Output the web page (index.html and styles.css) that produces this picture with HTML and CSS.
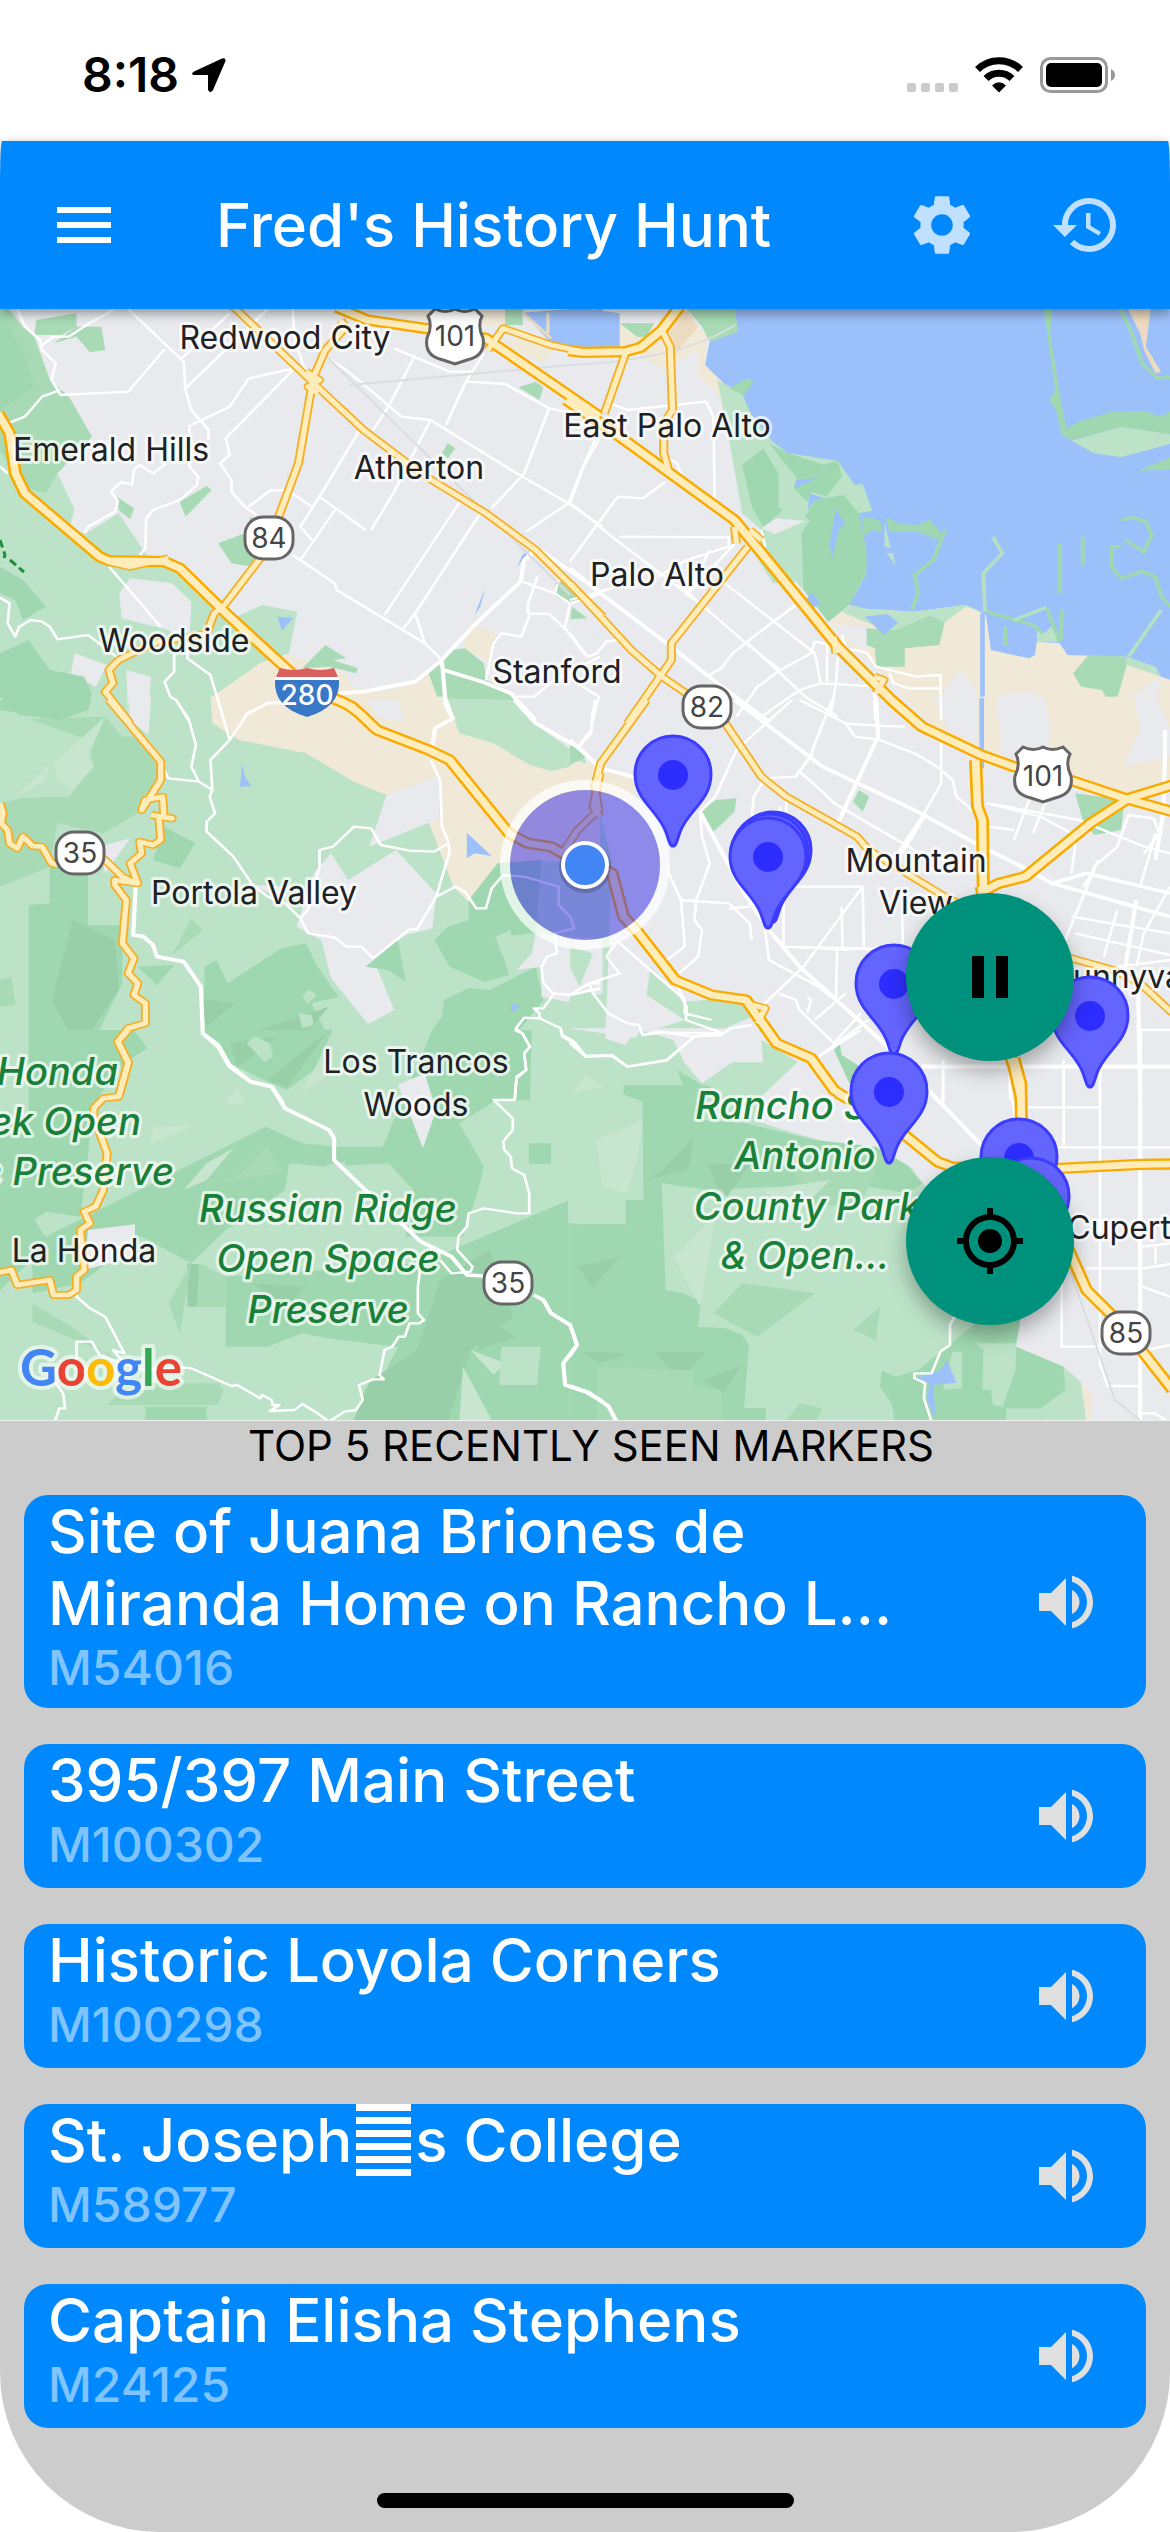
FILE: index.html
```html
<!DOCTYPE html>
<html lang="en">
<head>
<meta charset="utf-8">
<meta name="viewport" content="width=device-width, initial-scale=1">
<title>Fred's History Hunt</title>
<link rel="stylesheet" href="styles.css">
</head>
<body>
<div class="app">
  <div class="status">
    <div class="status-left">
      <span class="time">8:18</span>
      <svg class="locate-arrow" viewBox="0 0 36 36" aria-hidden="true"><path d="M3 14.500 31 1.500q4-1 3.500 2.500L22 33q-2.500 4-5 0V18H3q-4-1 0-3.500z"/></svg>
    </div>
    <svg class="status-icons" viewBox="0 0 208 38" aria-hidden="true">
      <g fill="#cbcbcb"><rect y="27" width="9" height="9" rx="2"/><rect x="14" y="27" width="9" height="9" rx="2"/><rect x="28" y="27" width="9" height="9" rx="2"/><rect x="42" y="27" width="9" height="9" rx="2"/></g>
      <g fill="none" stroke="#000" stroke-width="7"><path d="M70.500 13.500a30.500 30.500 0 0 1 43 0"/><path d="M79 22.500a18.500 18.500 0 0 1 26 0"/></g>
      <path d="M92 36.500 85 29.500q7-6.500 14 0z"/>
      <rect x="134.500" y="2.500" width="65" height="33" rx="9" fill="#fff" stroke="#999" stroke-width="3"/>
      <rect x="139" y="7" width="56" height="24" rx="5"/>
      <path d="M204 13q4 2 4 6t-4 6z" fill="#999"/>
    </svg>
  </div>

  <header class="bar">
    <button class="icon-button" aria-label="Menu"><svg viewBox="0 0 24 24"><path d="M3 18h18v-2H3v2zm0-5h18v-2H3v2zm0-7v2h18V6H3z"/></svg></button>
    <h1>Fred's History Hunt</h1>
    <button class="icon-button dim" aria-label="Settings"><svg viewBox="0 0 24 24"><path d="M19.140 12.940c.04-.3.06-.61.06-.94 0-.32-.02-.64-.07-.94l2.030-1.580c.18-.14.23-.41.12-.61l-1.920-3.320c-.12-.22-.37-.29-.59-.22l-2.390.96c-.5-.38-1.030-.7-1.620-.94l-.36-2.540c-.04-.24-.24-.41-.48-.41h-3.840c-.24 0-.43.17-.47.41l-.36 2.540c-.59.24-1.130.57-1.620.94l-2.390-.96c-.22-.08-.47 0-.59.22L2.740 8.870c-.12.21-.08.47.12.61l2.030 1.580c-.05.3-.09.63-.09.94s.02.64.07.94l-2.030 1.580c-.18.14-.23.41-.12.61l1.920 3.320c.12.22.37.29.59.22l2.390-.96c.5.38 1.030.7 1.620.94l.36 2.540c.05.24.24.41.48.41h3.840c.24 0 .44-.17.47-.41l.36-2.540c.59-.24 1.130-.56 1.620-.94l2.390.96c.22.08.47 0 .59-.22l1.920-3.320c.12-.22.07-.47-.12-.61l-2.010-1.580zM12 15.600c-1.980 0-3.600-1.620-3.600-3.600s1.620-3.600 3.600-3.600 3.600 1.620 3.600 3.600-1.620 3.600-3.600 3.600z"/></svg></button>
    <button class="icon-button dim" aria-label="History"><svg viewBox="0 0 24 24"><path d="M13 3c-4.970 0-9 4.030-9 9H1l3.890 3.890.07.14L9 12H6c0-3.870 3.130-7 7-7s7 3.130 7 7-3.130 7-7 7c-1.930 0-3.680-.79-4.940-2.060l-1.420 1.420C8.270 19.990 10.510 21 13 21c4.970 0 9-4.030 9-9s-4.030-9-9-9zm-1 5v5l4.280 2.540.72-1.210-3.500-2.080V8H12z"/></svg></button>
  </header>

  <section class="map" aria-label="Map">
    <svg class="map-canvas" viewBox="0 309 1170 1111" role="img" aria-label="Map of Palo Alto and Mountain View">
      <defs>
        <g id="freeways">
          <g transform="translate(0 300) scale(.38265 .33333)"><path d="M-5 340 25 400 40 520 65 580 260 770 285 782 430 785 470 805 600 950 800 1160 900 1208 940 1240 985 1290M880 22 960 60 1110 85 1270 115 1568 350"/></g>
          <g transform="translate(570 300) scale(.38265 .33333)"><path d="M-10 300 100 385 430 660 530 800 700 1040 840 1200 920 1280M-4 152 35 157 145 155 185 142 240 90 285 22"/></g>
          <g transform="translate(0 700) scale(.38265 .33333)"><path d="M870 -5 920 20 985 90 1120 150 1175 180 1330 400 1380 430 1440 440 1500 480"/></g>
          <g transform="translate(570 700) scale(.38265 .33333)"><path d="M0 460 110 520 140 650 180 700 275 840 370 885 460 900 540 1030 630 1075 690 1170 730 1200M840 0 920 80 1075 165 1160 200 1320 245 1450 295 1575 335M1060 180 1065 320 1078 360 1080 570M1575 255 1460 295 1360 370 1190 530 1120 550 1070 580M1075 560 1130 1000 1160 1100 1180 1200"/></g>
          <g transform="translate(570 1030) scale(.38265 .33333)"><path d="M700 190 800 250 880 320 960 395 1000 412 1100 408 1280 415 1490 403 1575 402M1160 85 1178 160 1180 300 1280 600 1350 780 1420 860 1500 970 1575 1080"/></g>
        </g>
        <g id="arterials">
          <g transform="translate(0 300) scale(.38265 .33333)"><path d="M610 20 820 250 950 390 1100 520 1270 640 1400 750 1575 950M905 80 850 150 820 230 810 290 780 490 725 660M680 775 590 910 560 940 540 1000 400 1030 310 1080 285 1110 295 1150 275 1175 340 1270M1275 150 1315 85 1440 135 1530 157 1568 157M280 785 340 800 440 775M890 60 910 90M800 215 835 240 805 260 830 280"/></g>
          <g transform="translate(570 300) scale(.38265 .33333)"><path d="M0 850 160 1050 240 1130 310 1185M145 160 90 340M240 90 262 140 268 330 245 370 245 460 260 520M465 740 265 1030 265 1080 150 1270M430 680 435 730M470 690 500 720M690 1010 695 1060M795 1130 820 1140 800 1180"/></g>
          <g transform="translate(0 700) scale(.38265 .33333)"><path d="M285 0 420 185 420 240 370 330 380 300 425 290 428 345M395 345 450 355 415 350 420 420 400 435 365 425 370 460 340 490 360 550 300 540 300 555 330 600 320 730 350 775 335 820 360 850 350 885 380 910 380 970 335 985 308 1025 335 1090 310 1190M0 310 8 340 3 370 20 390 25 430 45 445 60 410 85 438 110 440 135 490 150 495M270 475 320 530 355 550M1568 220 1550 320 1568 350"/></g>
          <g transform="translate(570 700) scale(.38265 .33333)"><path d="M200 0 80 190 65 260 75 330 20 390 -20 460M400 60 500 230 565 290 750 410 780 450 980 590 1310 775 1420 810 1490 850 1575 940M460 910 510 925 490 970"/></g>
          <g transform="translate(0 1030) scale(.38265 .33333)"><path d="M335 0 308 35 335 95 310 200 270 205 245 235 245 260 280 370 270 480 250 530 220 545 235 580 210 600 220 720 200 740 200 780 180 795 140 795 130 750 45 765 30 720 -5 728"/></g>
        </g>
        <g id="pin"><path d="M0 0C-3 0-4-5-7-14-15-36-38-45-38-72a38 38 0 0 1 76 0C38-45 15-36 7-14 4-5 3 0 0 0z"/><circle cy="-71" r="15"/></g>
        <g id="us-shield"><path d="M-27-22-20-29Q-9-24 0-29 9-24 20-29L27-22Q22-12 28 0 31 18 12 22L0 26-12 22Q-31 18-28 0-22-12-27-22z"/></g>
      </defs>

      <rect y="300" width="1170" height="1130" fill="#e8eaed"/>

      <!-- Peninsula hills, north-west -->
      <g transform="translate(0 300) scale(.38265 .33333)">
        <path class="park" d="M0 20V1300H590L550 1195 680 1090 755 1060 777 935 685 915 600 960 500 850 380 760 310 640 225 700 180 690 195 628 150 520 240 410 180 290 130 240 90 110 60 80 20 20z"/>
        <path class="wood" d="M0 20 20 27 60 80 90 110 130 240 180 290 240 410 150 520 120 580 60 560 0 450z"/>
        <path class="city" d="M312 880 340 835 450 850 500 905 495 1040 440 990 318 955zM195 1060 280 1095 250 1160 185 1120zM330 1110 395 1130 385 1260H335z"/>
        <path class="forest" d="M0 40 60 150 90 260 0 330zM0 880 40 900 60 960 120 920 60 840 0 800zM0 1060 75 1020 130 1110 220 1130 240 1180 230 1230 160 1260 50 1245 0 1190z"/>
        <path class="wood" d="M95 60 200 40V80L160 105H90zM140 130 200 80 265 80 275 150 235 157 200 110zM470 605 540 558 553 570 485 650zM307 592 350 625 340 658 310 630zM570 730 640 700 655 650 690 680 660 800 605 790zM1355 262 1400 245 1420 262 1410 300zM1170 430 1190 445 1170 475 1155 460zM1450 850 1480 840 1530 900 1490 910 1455 890zM1495 920 1535 955 1490 958z"/>
        <path class="sand" d="M550 1195 680 1090 750 1062 790 1080 900 1120 920 1160 1000 1175 1090 1150 1120 1120 1170 1180V1270H555zM1225 970 1295 1000 1280 1085 1210 1045zM960 20H1320V75L1300 80 1240 70 1120 60zM1300 130 1440 100 1450 140 1420 190z"/>
        <path class="wood" d="M790 1105 850 1035 905 1075 870 1080 935 1105 930 1120 860 1100zM1120 1120 1180 1050 1215 1045 1265 1090 1270 1140 1340 1180 1400 1260H1165z"/>
        <path class="wood" d="M1320 20H1366V75H1320z"/>
        <path class="water" d="M725 950 767 953 737 992zM1240 945 1268 865 1255 920zM1352 800 1365 765 1385 750zM1366 38 1575 20V140L1450 140z"/>
        <path class="sand-line" d="M1366 38 1440 115M1432 38V100M1505 72 1560 20"/>
      </g>

      <!-- San Francisco Bay -->
      <g transform="translate(570 300) scale(.38265 .33333)">
        <path class="sand" d="M675 965 710 935 1087 920 1300 1050 1575 1130V1275H945L820 1125 700 1000zM130 70 240 80 290 20 330 80 355 100 353 195 415 265 420 400 400 320 380 270 335 230 335 150 240 210 205 180 130 140z"/>
        <path class="water" d="M430 20H1575V1142L1545 1130 1455 1070 1300 1065 1280 1030 1220 1025 1215 1065 1200 1075 1100 1050 1087 945 1035 915 900 935 750 925 730 915 520 700 450 285 415 265 353 195 365 125 435 95zM0 20 130 40V140H0z"/>
        <path class="dune" d="M260 100 300 20 335 80 260 180z"/>
        <path class="wood" d="M300 20H430L440 95 365 125 345 80zM130 70H220L200 110H175z"/>
        <path class="park" d="M385 240 450 280 460 310 475 345 530 425 570 460 700 482 790 632 755 640 775 820 730 915 675 965 620 880 590 845 530 850 470 740 500 690 450 640 425 480 410 380z"/>
        <path class="forest" d="M415 265 465 235 480 248 455 285zM450 495 505 445 545 520V620L557 630 505 682 475 620zM520 430 570 460 665 495 700 480 710 530 670 590 630 575 620 605 585 565 593 535zM605 700 628 660 615 650 640 600 715 585 755 640 775 750V815L730 915 675 965 610 870zM765 650 810 660 815 695 790 690 765 710zM825 650 860 672 910 675 940 658 970 700 965 720 910 695 835 695z"/>
        <path class="water" d="M695 625 720 675 705 680 685 775 678 735zM593 540 648 535 585 565zM625 580 665 595 640 600 622 630zM632 878 655 910 635 925 615 900z"/>
        <path class="park" d="M725 555 765 553 790 632 715 585zM822 665 838 745 822 740zM828 760H845L850 795z"/>
        <path class="city" d="M500 685 540 655 615 663 535 702zM680 975 780 980 775 1060 705 1000zM1020 1110 1060 1165 1055 1260H970L950 1215zM1115 1185 1215 1175 1250 1260H1120zM1465 1190 1545 1130 1520 1260zM880 1200 940 1185V1260z"/>
        <path class="wood" d="M775 985 850 990 940 945 980 965 965 1035 875 1045V1100H800L797 1045 775 1035zM1355 1065 1455 1070V1095L1430 1195 1405 1200 1390 1170 1335 1160 1315 1120z"/>
        <path class="park" d="M710 935 735 915 780 928 900 935 1035 915 1085 940 1035 920 980 965 940 945 850 990 780 970zM1455 1070 1530 1100 1545 1130 1455 1095zM1220 1025V980L1240 1000 1262 975 1280 1025z"/>
        <path class="water" d="M770 950 830 942 857 968 820 1005z"/>
        <path class="forest" d="M1237 20H1260L1255 100 1270 210 1280 280 1297 385 1330 365 1415 335 1500 333 1545 350 1575 330V405L1440 380 1310 420 1285 405 1270 330 1253 300 1268 270zM1485 512 1575 470V508z"/>
        <path class="park" d="M1310 422 1440 380 1575 404V430L1440 472 1370 460z"/>
        <path class="dune" d="M1455 20H1518L1505 140 1545 215 1530 220 1500 150 1490 100z"/>
        <path class="marsh" d="M1435 22 1465 90 1495 190 1535 235 1568 232M980 690 950 780 900 825 910 880 893 930M1280 730V880M1340 710V795M1440 660 1470 652 1505 665 1520 705 1500 755 1450 720M1440 740 1415 740 1415 800 1440 835 1495 815 1530 830 1545 890 1575 925M1090 935 1210 975 1235 1000M1245 925 1280 1025M1285 930 1283 1020M1137 980V1035"/>
        <path class="marsh pale" d="M1105 710 1130 760 1080 820 1085 935M1460 1070 1545 930M1160 960 1245 922"/>
        <path class="creek" d="M1078 940V1275"/>
      </g>

      <!-- Portola Valley -->
      <g transform="translate(0 700) scale(.38265 .33333)">
        <path class="park" d="M0 55H335V-5H570L1165-5 1350 0 1420 90 1530 180 1600 480 1575 1210H0z"/>
        <path class="city" d="M335-10H395L388 105 340 60zM1340 0H1568L1540 150 1420 90z"/>
        <path class="sand" d="M550-10 555 70 625 120 800 160 925 245 1010 285 1145 230 1150 355 1120 365 1165 500 1185 560 1240 625H1270L1310 530 1300 490 1568 480V180L1440 213 1385 195 1290 130 1200 100 1165-10z"/>
        <path class="city" d="M960 0H1040L1055 65 985 50zM1010 285 1145 228 1150 355 965 440zM865 460 910 540 1035 450 1140 580 1130 685 1060 705 975 775 1030 930 962 972 865 835 840 720 775 680 820 520zM660 555 760 560 740 600z"/>
        <path class="wood" d="M0 60 275 50 320 110 350 110 420 190 415 240 360 340 270 400 150 370 130 500 0 560z"/>
        <path class="forest" d="M0 0H240L230 30 150 60 90 45 0 30z"/>
        <path class="park" d="M0 55 60 50 230 120 245 200 180 290 60 295 0 310z"/>
        <path class="moss" d="M140 190 275 50 230 170 245 200 190 265 150 240zM35 295 130 190 120 240z"/>
        <path class="forest" d="M430 380 510 430 470 505 400 480zM75 615 130 610V500H230V675H320V850L250 1010 340 1000 385 1045 300 1100 290 1210H75zM535 800 565 780 595 850 735 745 800 730 830 800 885 890 815 910 870 1040 750 1200 700 1150 590 1080 530 1000zM1135 720 1170 680 1225 660V600L1300 490 1415 480 1400 700 1300 710 1330 825 1265 845 1175 800zM955 800 1040 720 1060 845 1015 810zM1160 900 1225 865 1280 870 1400 800 1420 900 1350 1000 1385 1210H1080L1090 1050 1155 950zM360 800 455 795 410 855z"/>
        <path class="dark" d="M190 660 300 720 310 870 240 990 190 1015 135 900zM520 895 615 910 540 980zM600 1020 860 920 740 1080 860 990 750 1180 690 1080z"/>
        <path class="wood" d="M450 765 500 655 530 690zM0 840 30 830 40 915 0 920z"/>
        <path class="park" d="M790 890 805 868 828 885 805 912zM780 940 815 945 820 975 790 985zM645 1030 665 1008 705 1030 713 1070 690 1085zM1295 710 1335 690 1335 790 1310 760z"/>
        <path class="city" d="M1415 800 1350 810 1390 760 1400 700 1575 720V880L1480 905 1415 890zM260 440 340 415 275 520zM1040 1150 1110 1120 1130 1210H1060z"/>
        <path class="water" d="M633 192 640 230 657 258 627 260zM1220 398 1285 468 1240 460 1220 475zM1335 908 1360 920 1335 937z"/>
      </g>

      <!-- Mountain View -->
      <g transform="translate(570 700) scale(.38265 .33333)">
        <path class="sand" d="M0 175 80 205 180 235 160 290 0 285zM870-10H1575V250L1450 290 1320 240 1160 190 1075 150 960 90 930 60z"/>
        <path class="city" d="M950-10H1065V130L990 90zM1115-10H1240L1255 90 1245 180 1130 170zM1475-10H1530L1568 85V170L1445 200 1490 90z"/>
        <path class="wood" d="M0 120 45 170 0 195zM340 335 380 300 435 295 430 335 375 395zM755 270 782 290 765 335 740 305zM1320 280 1450 300 1440 390 1370 405 1340 360z"/>
        <path class="park" d="M0 740 60 760 25 860 0 800zM0 880 60 870 75 950 75 1010 145 1035 180 975 190 1000 300 960 200 885 210 800 300 905 460 890 475 950 405 985 390 1000 325 1010 270 1030 295 1110 345 1150 370 1130 425 1085 505 1085 500 1020 590 1080 700 1125 560 1210H0zM690 1050 705 1030 710 1070 780 1130 730 1190z"/>
        <path class="creek" d="M1076-5V205"/>
      </g>

      <!-- Russian Ridge -->
      <g transform="translate(0 1030) scale(.38265 .33333)">
        <path class="park" d="M0 0H1580V1180H0z"/>
        <path class="forest" d="M75 0H350L385 55 310 110 240 230 230 380 210 560 120 545 90 570 130 640 0 780V300L75 250zM530 0H870L820 120 750 180 690 150 600 100zM695 290 790 340 880 350 1000 350 1130 0H1390L1385 210 1290 215 1200 280 1265 410 1250 480 1210 620 1060 620 1080 480 1015 400 850 410 755 400 745 480 590 600 500 700 370 620 210 760 85 790V640zM590 740 1100 700 1568 470V1180H1000L940 1140 950 1060 1000 1040 1040 950 850 925 800 950H590z"/>
        <path class="park" d="M1385 250 1568 130V585H1520V460H1440L1430 540 1385 550zM790 910 950 945 1010 960 930 1130 860 1175H540V1080L590 1000z"/>
        <path class="forest" d="M1382 340H1440V402H1382zM380 1130H540V1180H380z"/>
        <path class="dark" d="M1090 960 1150 750 1280 660 1340 860 1230 960 1170 1180H920L970 1050zM600 40 730 20 620 110zM1255 850 1350 920 1250 960zM700 150 860 0 750 170zM490 700 530 705 515 830H490zM660 760 800 770 750 830zM1480 960 1568 950V990z"/>
        <path class="wood" d="M85 820V875L280 970 380 1060 570 1060 585 1080 570 1125H280L350 1040 200 900zM520 700 590 740V830H515zM440 820 500 700 470 910zM535 460 740 430 700 350 620 440z"/>
        <path class="moss" d="M400 290 510 285 395 340zM480 480 540 400 610 355 540 450zM780 190 840 90 850 140zM1490 240 1560 230 1500 400zM585 220 620 175 640 220zM1210 1010 1290 1180H1200zM1230 960 1320 1000 1290 1035z"/>
        <path class="park" d="M1310 950H1413L1403 1065H1305zM850 405 900 395 920 450zM915 440 1000 405 1018 440V480H930zM645 40 665 18 705 40 713 80 690 95z"/>
        <path class="city" d="M1040 165 1110 130 1140 240 1105 355 1080 280zM230 600 353 583 350 680 220 720z"/>
      </g>

      <!-- Rancho San Antonio -->
      <g transform="translate(570 1030) scale(.38265 .33333)">
        <path class="city" d="M-5-5H1580V1180H1100L400 100 345 160 300 100 270 40z"/>
        <path class="park" d="M-5 40 70 60 145 75 185 0 270 30 300 100 345 160 425 97H505L500 30 595 95 500 200 480 270 560 300 680 340 790 350 890 410 930 470 1165 900V950L1290 1010 1335 1055 1365 1180H-5z"/>
        <path class="forest" d="M140 165H295L280 120 345 165 370 170 340 270 460 280 640 330 800 350 880 405 920 460 880 490 780 470H540L360 480 240 460 250 780 295 790 342 815 335 890 410 895 450 915 468 945 455 1135H512V1180H-5V580L35 583H145V510H192L188 213H140zM690 60 705 40 710 75 780 125 730 160zM815 1020 850 1040 910 1020 1060 880 1180 850 1165 950 1290 1010 1295 1080 1230 1135V1180H850L840 1120 810 1070z"/>
        <path class="park" d="M-5 130 190 215V505H145V580H35V460H-5zM1060 940H1165V1020L1130 1130 1105 1125 1100 1080H1078L1080 960zM980 1080 1024 1075V965H1000L975 1070zM1140 1135H1230V1180H1140zM590 1000 680 965 670 1090z"/>
        <path class="dark" d="M360 400 470 405 410 500 380 460zM230 430 325 320 310 420 200 450zM20 710 130 680 60 775zM25 965 155 970 80 1000zM220 965H355L290 1050zM350 1050 450 1005 400 1090z"/>
        <path class="wood" d="M375 850 450 760 640 790 490 920zM570 400 680 350 800 420 760 520 640 530zM740 900 810 830 800 930zM70 1010 320 1020 325 1070 395 1080V1180H70zM600 1120 660 1135 640 1180H560z"/>
        <path class="moss" d="M70 330 190 270 180 360 150 490 85 470zM270 680 380 560 340 830zM500 480 680 450 600 540zM5 190 40 135 90 170z"/>
        <path class="water" d="M905 1045 970 1020 985 990 1010 1058 950 1065 955 1165 932 1110 940 1060z"/>
        <path class="sand" d="M1335 1055 1365 1100 1363 1180H1350z"/>
      </g>

      <!-- Local streets -->
      <g class="streets">
        <g transform="translate(0 300) scale(.38265 .33333)"><path d="M45 27 65 80 105 120 110 150 145 190 135 240 158 285M105 140 140 110 180 110 240 65 300 27M158 285 335 275 430 148M158 270 110 290 65 350 20 370M335 27 480 185 485 270 500 330 545 390 545 420M480 270 700 27M470 180 600 40M765 27 770 120 800 220M500 375 600 320 650 235 770 205 590 415 600 465 575 490 605 540 605 575 640 620 670 645M495 375V500L518 530 515 555 470 600 400 630 382 655 380 745 365 765M435 490 400 520 365 495 350 510 345 555 318 545 290 575 308 605 300 635 230 680 220 700M650 620 705 572 750 570 815 620M940 390 835 590 785 680 815 720M835 590 955 690M875 630 785 780M1205 600 1005 945M1258 635 1085 940 1055 985M1085 940 1110 1030M765 765 875 850 880 870 1110 1030 1155 1080M850 170 905 210 1050 350 1125 360 1350 520 1485 610 1575 680M1085 165 1015 320 975 390M1030 145 1175 215 1230 215M1265 160 1220 240 1165 375M1220 245 1320 252 1435 325 1500 340M1435 325 1370 520 1285 625M1125 360 1030 575 970 690M1555 420 1520 510 1485 610 1375 695M1405 830 1380 910V940L1435 942 1480 990 1530 1065M1365 845 1450 880 1490 910 1475 990M1575 880 1490 910M1385 945 1362 1010 1310 1000 1290 1030 1270 1140M1465 820 1450 880M285 800 420 980M-5 890 25 910 20 970 40 1010 50 980 80 960 110 965 130 980 150 1018 230 1005 310 1075M455 1060V1115L430 1145 445 1190 460 1200 495 1260M490 1030V1075L550 1125 585 1260M635 1260 645 1240 700 1210H740M0 500 20 520M1340 1190H1395L1450 1140 1568 1070"/><path class="wide" d="M885 1180 950 1175 1085 1145 1150 1085 1240 975 1360 845 1370 780 1405 745 1575 880M1155 1085 1165 1215 1185 1260M1160 1110 1260 1145 1335 1180 1350 1200 1400 1260"/></g>
        <g transform="translate(570 300) scale(.38265 .33333)"><path d="M105 310 150 330 355 305 375 350 378 595M75 420 35 500 0 610M250 545 190 595 125 590 70 675 0 785M0 610 20 625 115 715 350 920M130 710 415 712V740L305 780 230 830M435 725 350 830 305 885 365 750M0 900 80 875 170 845M405 850 640 1060M590 915 480 1010 425 1060 395 1105 365 1125M435 1250 490 1160 550 1110 630 1060 640 1025 775 1058 800 1100 905 1130 968 1125 970 1260M550 1110 465 1035 285 855M245 470 280 490 290 520M465 1030 620 1195 700 1250M500 1250 600 1170 655 1150 780 1158M640 1060 655 1150M672 1035V1145M700 1070 695 1150 680 1250M835 1120 845 1150 885 1165H968M0 1000 45 1070 70 1060 95 1025 125 1020M0 1135 75 1190 60 1260M500 690 510 740M590 850 600 910M710 1005 720 1040"/><path class="wide" d="M0 805 80 880 270 1045 380 1145 520 1265M795 1140 800 1260"/></g>
        <g transform="translate(0 700) scale(.38265 .33333)"><path d="M420 190 440 235 520 245 555 270 548 290 562 340 540 365 540 395 610 470 660 555 700 590 745 610 785 655 805 700 875 712 905 740H945L975 775 1070 688H1090L1140 590 1175 455 1170 420 1155 380 1150 240 1125 180M460 0 495 65 512 135 500 200 520 245M570 0 600 120 550 180 555 270M600 120 645 45 700 8H740M785 655 805 630 835 500V450L870 440 925 380 970 385 995 435 1070 452 1135 455 1170 430M1140 590 1190 560 1215 575 1245 625H1270L1285 565 1315 525 1370 530 1460 560V615L1490 650 1500 685 1450 700 1455 760 1430 770 1415 800 1420 850 1445 880 1490 885 1568 865M1445 885 1420 925H1395L1410 940V955L1370 953 1348 985 1365 1000 1385 1040 1370 1060 1375 1110 1350 1130 1345 1200M1410 955 1465 985 1470 1005 1500 1025 1530 1068H1568M1535 850H1568M1515 135 1545 90 1555 0"/><path class="wide" d="M355 550 348 705 375 710 400 735 410 770 480 785 525 860 530 1000 570 1040 600 1100 655 1145 710 1160 740 1210M1165 0 1183 55 1137 85 1130 140M1345 0 1400 70 1515 145 1575 210"/></g>
        <g transform="translate(570 700) scale(.38265 .33333)"><path d="M75 0 60 30 55 100 20 145M580 0 435 150 380 290 340 335 345 410 365 490 330 600 325 660 345 690 335 770 265 840M600 0 720 70 745 110 805 118 900 160 960 200 1000 240 1010 290 1060 340M685 0 640 130 630 165 590 230 510 235 480 290 475 350M715 70 820 78 875 80M635 160 600 215 650 265 690 310 900 450 1000 490M970 100V250L920 350 850 470M565 290V350M550 320 545 400M1200 300 1160 420M1260 180 1245 300 1210 400M1095 310 1330 360 1500 440 1568 460M1095 380 1160 390M250 500 290 600 300 740 240 790M290 600 415 610 470 670 475 720M415 625 470 620M560 560H765M765 560 610 800 500 920M558 560V740M710 620 712 740M765 560 768 740M868 640 870 740M510 690 520 780 650 860 680 890M560 740 870 748M698 750 695 900M560 740 730 750M370 960 300 940V900L275 850M120 720 190 790 290 890 305 920 303 960 400 1000 420 985 475 975M120 730 95 770 130 820 50 850 60 880 100 940 150 970 180 975 190 1005 230 995 320 1010 390 1000M325 1010 255 1080 150 1100 110 1065 40 1070 0 1025M50 850 0 885M545 880 590 900 600 930 690 1030 760 940M620 940 630 900 620 890M650 1070 780 960M640 960 720 880M975 1080V1210M1290 1080V1210M1385 1100V1210M1150 1070V1200M1430 800 1568 780M1480 990H1568M1310 650 1568 700M1320 700 1568 765M1380 480 1280 760M1430 630 1395 770M1530 400 1490 560M1460 345 1430 440 1370 500 1360 530 1340 560M1460 345 1525 355 1540 400 1500 460M1568 560 1500 700 1480 800M1310 520 1320 440 1310 400 1230 350 1090 310"/><path class="wide" d="M80 205 180 235M0 120 80 205M340 335 450 570 520 690 600 800 850 1060 960 1200M430 0 660 200 900 330 1060 430 1180 500 1260 550 1350 520 1568 580M800 0 805 110 700 370M930 340 860 470M1480 600 1450 810M1485 880 1490 1210M920 1100H1575M1555 90V170L1550 340 1530 480M1260 550 1568 650"/></g>
        <g transform="translate(0 1030) scale(.38265 .33333)"><path d="M1345 0 1365 10 1385 50 1370 70 1375 120 1350 145 1345 210H1290L1340 265V300L1315 335 1318 360 1335 380 1338 415 1370 435 1383 490V550H1350L1265 535 1225 550 1220 590 1198 620 1195 660 1235 710 1230 725 1180 730 1150 690M1465 0 1470 20 1500 40 1530 78H1568M200 780V800L235 835 275 860 325 970 295 960 330 1005 380 1020 480 1012 500 1015 605 1068 620 1065 680 1105 685 1095 710 1110 712 1125H730L705 1143 770 1140 790 1122 830 1150 860 1175 900 1145 930 1140 948 1110 938 1065 975 1048H1003L992 1035 1005 960 1025 950 1042 920H1058L1070 880H1095L1108 870 1092 850V770L1100 700M200 1020V935H240L260 975 320 1000M140 1050 165 1090 170 1135H155L143 1175"/><path class="wide" d="M530 10 570 45 600 105 655 155 710 170 745 235 860 300 873 325V390L950 475 1100 635 1180 680 1220 735 1265 738M1395 795 1420 810 1440 850 1490 885 1508 945 1472 1000 1477 1065 1530 1085 1575 1115"/></g>
        <g transform="translate(570 1030) scale(.38265 .33333)"><path d="M0 40 40 78H110L150 110 250 92 325 20 400 15M185 0 190 15 240 8 400 10M650 80 760 0M975 90V215M1290 110V345M1385 110V1000L1405 1068H1490M1150 90V180L1165 265M1195 232H1385M1350 715H1500L1568 702M1285 760V950H1490M1495 650 1568 640M1530 650V700M1495 770 1568 800M1490 965 1568 945M1490 1150H1530L1568 1180M1275 352H1575M1005 860 993 885V945L968 965 945 1030H900V1045L928 1060 925 1105 945 1175M0 880 20 945 0 980M780 0 890 120"/><path class="wide" d="M920 110H1575M1490 0V1175M940 185 1075 345M0 1068 50 1088 100 1128 122 1175"/></g>
      </g>
      <path class="rail" d="M325 355 570 595M350 385 570 365Q680 360 735 325M1070 1270 1115 1400 1140 1420"/>
      <path class="trail" d="M0 540 5 555 4 558M10 560 24 572"/>

      <use href="#arterials" class="line arterial-case"/>
      <use href="#freeways" class="line freeway-case"/>
      <use href="#arterials" class="line arterial-core"/>
      <use href="#freeways" class="line freeway-core"/>

      <!-- Route shields -->
      <g class="shield">
        <g transform="translate(455 338)"><use href="#us-shield"/><text y="8">101</text></g>
        <g transform="translate(1043 776)"><use href="#us-shield"/><text y="10">101</text></g>
        <g transform="translate(269 538)"><rect x="-24" y="-21" width="48" height="42" rx="18"/><text y="10">84</text></g>
        <g transform="translate(707 707)"><rect x="-24" y="-21" width="48" height="42" rx="18"/><text y="10">82</text></g>
        <g transform="translate(80 853)"><rect x="-24" y="-21" width="48" height="42" rx="18"/><text y="10">35</text></g>
        <g transform="translate(508 1283)"><rect x="-24" y="-21" width="48" height="42" rx="18"/><text y="10">35</text></g>
        <g transform="translate(1126 1333)"><rect x="-24" y="-21" width="48" height="42" rx="18"/><text y="10">85</text></g>
      </g>
      <g class="interstate" transform="translate(307 693)">
        <path fill="#d9605f" d="M-31-16-27-25Q-13-21 0-25 13-21 27-25L31-16z"/>
        <path fill="#fff" d="M-32-16H32V-13H-32z"/>
        <path fill="#3878c7" d="M-32-13H32Q34 14 0 24-34 14-32-13z"/>
        <text y="12">280</text>
      </g>

      <!-- Place names -->
      <g class="place">
        <text x="285" y="349">Redwood City</text>
        <text x="111" y="461">Emerald Hills</text>
        <text x="419" y="479">Atherton</text>
        <text x="174" y="652">Woodside</text>
        <text x="557" y="683">Stanford</text>
        <text x="667" y="437">East Palo Alto</text>
        <text x="657" y="586">Palo Alto</text>
        <text x="254" y="904">Portola Valley</text>
        <text x="916" y="872">Mountain</text>
        <text x="916" y="914">View</text>
        <text x="416" y="1073">Los Trancos</text>
        <text x="416" y="1116">Woods</text>
        <text x="84" y="1262">La Honda</text>
        <text x="1131" y="988">Sunnyvale</text>
        <text x="1142" y="1239">Cupertino</text>
      </g>
      <g class="place preserve">
        <text class="end" x="118" y="1085">La Honda</text>
        <text class="end" x="141" y="1135">Creek Open</text>
        <text class="end" x="174" y="1185">Space Preserve</text>
        <text x="328" y="1222">Russian Ridge</text>
        <text x="328" y="1272">Open Space</text>
        <text x="328" y="1323">Preserve</text>
        <text x="805" y="1119">Rancho San</text>
        <text x="805" y="1169">Antonio</text>
        <text x="807" y="1220">County Park</text>
        <text x="805" y="1269">&amp; Open...</text>
      </g>

      <!-- Nearby marker pins -->
      <g class="pins">
        <use href="#pin" x="673" y="846"/>
        <use href="#pin" x="773" y="922"/><use href="#pin" x="770" y="924"/><use href="#pin" x="768" y="928"/>
        <use href="#pin" x="894" y="1055"/><use href="#pin" x="1090" y="1087"/><use href="#pin" x="889" y="1163"/>
        <use href="#pin" x="1019" y="1229"/><use href="#pin" x="1031" y="1268"/>
      </g>

      <!-- Current location -->
      <circle cx="585" cy="865" r="80" fill="none" stroke="#fff" stroke-opacity=".7" stroke-width="10"/>
      <circle cx="585" cy="865" r="75" fill="#3c32e6" fill-opacity=".52"/>
      <circle cx="585" cy="867" r="26" fill="#223" fill-opacity=".25"/>
      <circle cx="585" cy="865" r="22" fill="#4285f4" stroke="#fff" stroke-width="4"/>

      <text class="google" x="20" y="1386"><tspan fill="#4285f4">G</tspan><tspan fill="#ea4335">o</tspan><tspan fill="#fbbc05">o</tspan><tspan fill="#4285f4">g</tspan><tspan fill="#34a853">l</tspan><tspan fill="#ea4335">e</tspan></text>
    </svg>

    <div class="map-actions">
      <button class="fab" aria-label="Pause"><svg viewBox="0 0 24 24"><path d="M6 19h4V5H6v14zm8-14v14h4V5h-4z"/></svg></button>
      <button class="fab" aria-label="Center on my location"><svg viewBox="0 0 24 24"><path d="M12 8c-2.210 0-4 1.790-4 4s1.790 4 4 4 4-1.790 4-4-1.790-4-4-4zm8.940 3c-.46-4.170-3.770-7.480-7.940-7.940V1h-2v2.060C6.830 3.520 3.520 6.830 3.060 11H1v2h2.060c.46 4.170 3.770 7.480 7.940 7.940V23h2v-2.060c4.170-.46 7.480-3.770 7.940-7.940H23v-2h-2.060zM12 19c-3.870 0-7-3.130-7-7s3.130-7 7-7 7 3.130 7 7-3.130 7-7 7z"/></svg></button>
    </div>
  </section>

  <main class="recent">
    <h2>TOP 5 RECENTLY SEEN MARKERS</h2>
    <ul class="cards">
      <li class="card">
        <div class="card-text"><h3>Site of Juana Briones de<br>Miranda Home on Rancho L...</h3><p>M54016</p></div>
        <button class="speak" aria-label="Read aloud"><svg viewBox="0 0 24 24"><path d="M3 9v6h4l5 5V4L7 9H3zm13.500 3c0-1.770-1.020-3.290-2.500-4.030v8.050c1.480-.73 2.500-2.250 2.500-4.020zM14 3.230v2.060c2.890.86 5 3.540 5 6.710s-2.110 5.850-5 6.710v2.060c4.010-.91 7-4.490 7-8.770s-2.990-7.860-7-8.770z"/></svg></button>
      </li>
      <li class="card">
        <div class="card-text"><h3>395/397 Main Street</h3><p>M100302</p></div>
        <button class="speak" aria-label="Read aloud"><svg viewBox="0 0 24 24"><path d="M3 9v6h4l5 5V4L7 9H3zm13.500 3c0-1.770-1.020-3.290-2.500-4.030v8.050c1.480-.73 2.500-2.250 2.500-4.020zM14 3.230v2.060c2.890.86 5 3.540 5 6.710s-2.110 5.850-5 6.710v2.060c4.010-.91 7-4.490 7-8.770s-2.990-7.860-7-8.770z"/></svg></button>
      </li>
      <li class="card">
        <div class="card-text"><h3>Historic Loyola Corners</h3><p>M100298</p></div>
        <button class="speak" aria-label="Read aloud"><svg viewBox="0 0 24 24"><path d="M3 9v6h4l5 5V4L7 9H3zm13.500 3c0-1.770-1.020-3.290-2.500-4.030v8.050c1.480-.73 2.500-2.250 2.500-4.020zM14 3.230v2.060c2.890.86 5 3.540 5 6.710s-2.110 5.850-5 6.710v2.060c4.010-.91 7-4.490 7-8.770s-2.990-7.860-7-8.770z"/></svg></button>
      </li>
      <li class="card">
        <div class="card-text"><h3>St. Joseph<span class="missing-glyph"></span>s College</h3><p>M58977</p></div>
        <button class="speak" aria-label="Read aloud"><svg viewBox="0 0 24 24"><path d="M3 9v6h4l5 5V4L7 9H3zm13.500 3c0-1.770-1.020-3.290-2.500-4.030v8.050c1.480-.73 2.500-2.250 2.500-4.020zM14 3.230v2.060c2.890.86 5 3.540 5 6.710s-2.110 5.850-5 6.710v2.060c4.010-.91 7-4.490 7-8.770s-2.990-7.860-7-8.770z"/></svg></button>
      </li>
      <li class="card">
        <div class="card-text"><h3>Captain Elisha Stephens</h3><p>M24125</p></div>
        <button class="speak" aria-label="Read aloud"><svg viewBox="0 0 24 24"><path d="M3 9v6h4l5 5V4L7 9H3zm13.500 3c0-1.770-1.020-3.290-2.500-4.030v8.050c1.480-.73 2.500-2.250 2.500-4.020zM14 3.230v2.060c2.890.86 5 3.540 5 6.710s-2.110 5.850-5 6.710v2.060c4.010-.91 7-4.490 7-8.770s-2.990-7.860-7-8.770z"/></svg></button>
      </li>
    </ul>
    <div class="home-indicator"></div>
  </main>
</div>
</body>
</html>
```
FILE: styles.css
```css
* { box-sizing: border-box; }
body { margin: 0; background: #fff; font-family: Inter, "Liberation Sans", sans-serif; }
h1, h2, h3, p, ul { margin: 0; padding: 0; }
ul { list-style: none; }
button { border: 0; padding: 0; background: none; cursor: pointer; }
svg { display: block; }

.app { display: flex; flex-direction: column; min-height: 100vh; }

.status { display: flex; align-items: center; justify-content: space-between; height: 141px; padding: 8px 55px 0 82px; }
.status-left { display: flex; align-items: center; gap: 12px; }
.time { font-size: 48px; line-height: 56px; font-weight: 600; }
.locate-arrow { width: 36px; height: 36px; }
.status-icons { width: 208px; height: 38px; }

.bar { position: relative; z-index: 1; display: flex; align-items: center; height: 168px; padding: 0 12px; background: #0089ff; color: #fff; border-radius: 2px 2px 0 0 / 48px 48px 0 0; box-shadow: 0 4px 12px rgba(0, 0, 0, .4); }
.bar h1 { flex: 1; padding-left: 60px; font-size: 60px; line-height: 72px; font-weight: 500; white-space: nowrap; }
.icon-button { display: flex; align-items: center; justify-content: center; width: 144px; height: 144px; color: #fff; }
.icon-button svg { width: 72px; height: 72px; fill: currentColor; }
.icon-button.dim { color: #bfe1ff; }

.map { position: relative; overflow: hidden; border-bottom: 1px solid #f0f0f0; }
.map-canvas { width: 100%; height: auto; }
.map-actions { position: absolute; right: 96px; bottom: 95px; display: flex; flex-direction: column; gap: 96px; }
.fab { display: flex; align-items: center; justify-content: center; width: 168px; height: 168px; border-radius: 50%; background: #00917c; box-shadow: 0 10px 20px rgba(0, 0, 0, .3); }
.fab svg { width: 72px; height: 72px; }

.city { fill: #e8eaed; }
.park { fill: #bce3c8; }
.wood { fill: #a8dab5; }
.forest { fill: #9fd8b0; }
.dark { fill: #98cfa8; }
.moss { fill: #c8e6cf; }
.sand { fill: #f1e9d7; }
.dune { fill: #eddbc1; }
.water { fill: #9cc0fa; }
.sand-line { fill: none; stroke: #eddbc1; stroke-width: 8; }
.creek { fill: none; stroke: #9cc0fa; stroke-width: 12; }
.marsh { fill: none; stroke: #9fd8b0; stroke-width: 10; }
.marsh.pale { stroke: #b4e0c3; }
.streets { fill: none; stroke: #fff; stroke-width: 7; stroke-linejoin: round; }
.streets .wide { stroke-width: 11; }
.rail { fill: none; stroke: #dadce0; stroke-width: 2; }
.trail { fill: none; stroke: #1e8e3e; stroke-width: 3; stroke-dasharray: 8 4; }
.line { fill: none; stroke-linejoin: round; }
.arterial-case { stroke: #f5b02a; stroke-width: 24; }
.arterial-core { stroke: #feecbb; stroke-width: 14; }
.freeway-case { stroke: #f9ab00; stroke-width: 34; }
.freeway-core { stroke: #feecbb; stroke-width: 20; }

.shield { fill: #fff; stroke: #666; stroke-width: 3; }
.shield text { fill: #444; stroke: none; font-size: 28px; text-anchor: middle; }
.interstate text { fill: #fff; font-size: 28px; font-weight: 500; text-anchor: middle; }
.place { fill: #202124; stroke: #fff; stroke-opacity: .7; stroke-width: 6; stroke-linejoin: round; paint-order: stroke; font-size: 32px; text-anchor: middle; }
.preserve { fill: #188038; font-size: 38px; font-style: italic; font-weight: 500; }
.end { text-anchor: end; }
.pins { fill: #6464ff; stroke: #3c3cff; stroke-width: 3; }
#pin circle { fill: #2d2dff; stroke: none; }
.google { font-family: Lato, sans-serif; font-size: 51px; font-weight: 700; stroke: #fff; stroke-opacity: .6; stroke-width: 8; stroke-linejoin: round; paint-order: stroke; }

.recent { flex: 1; display: flex; flex-direction: column; padding: 0 24px 24px; background: #ccc; border-radius: 0 0 160px 160px; }
.recent h2 { padding: 0 0 24px 12px; font-size: 42px; line-height: 50px; font-weight: 400; text-align: center; }
.cards { display: flex; flex-direction: column; gap: 36px; }
.card { display: flex; align-items: center; min-height: 144px; padding: 0 44px 0 24px; background: #0089ff; border-radius: 24px; }
.card-text { flex: 1; align-self: flex-start; min-width: 0; padding-bottom: 11px; }
.card h3 { color: #fff; font-size: 60px; line-height: 72px; font-weight: 500; }
.card p { color: #80c4ff; font-size: 48px; line-height: 58px; font-weight: 500; }
.speak { color: #e0e0e0; }
.speak svg { width: 72px; height: 72px; fill: currentColor; }
.missing-glyph { display: inline-block; width: 55px; height: 72px; margin: 0 4px; vertical-align: top; background: repeating-linear-gradient(#fff 0 7px, transparent 7px 13px); }
.home-indicator { width: 417px; max-width: 60%; height: 15px; margin: auto auto 0; border-radius: 8px; background: #000; }
```
